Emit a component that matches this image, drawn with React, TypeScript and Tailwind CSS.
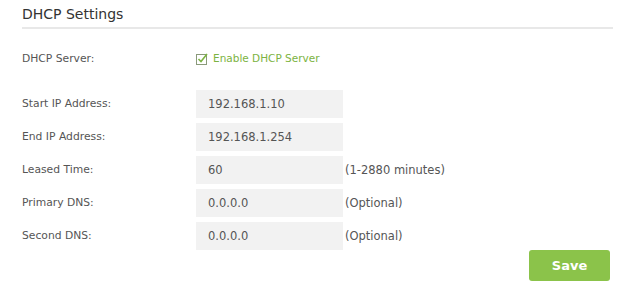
const rows = [
  { label: "Start IP Address:", value: "192.168.1.10", hint: "" },
  { label: "End IP Address:", value: "192.168.1.254", hint: "" },
  { label: "Leased Time:", value: "60", hint: "(1-2880 minutes)" },
  { label: "Primary DNS:", value: "0.0.0.0", hint: "(Optional)" },
  { label: "Second DNS:", value: "0.0.0.0", hint: "(Optional)" },
];

const CheckIcon = () => (
  <svg width="12" height="12" viewBox="0 0 12 12" className="shrink-0">
    <rect x="0.5" y="1.5" width="10" height="10" fill="none" stroke="#8a9a7a" strokeWidth="1" />
    <path d="M2.5 6 L5 8.5 L11 1" fill="none" stroke="#7cb342" strokeWidth="1.6" />
  </svg>
);

export default function App() {
  return (
    <div
      className="w-[624px] h-[299px] bg-white text-[#555] overflow-hidden"
      style={{ fontFamily: '"DejaVu Sans", Verdana, sans-serif' }}
    >
      <div className="pl-[22px] w-[613px]">
        <h2 className="text-[14px] leading-none text-[#333] pt-[7px] pb-[6px] border-b-2 border-[#e8e8e8]">
          DHCP Settings
        </h2>

        <div className="flex items-center mt-[22px] text-[10.75px]">
          <div className="w-[174px]">DHCP Server:</div>
          <label className="flex items-center gap-[5px] text-[10.5px] text-[#7cb342]">
            <CheckIcon />
            <span>Enable DHCP Server</span>
          </label>
        </div>

        <div className="flex flex-col gap-[5px] mt-[23px] text-[10.75px]">
          {rows.map((row) => (
            <div key={row.label} className="flex items-center">
              <div className="w-[174px]">{row.label}</div>
              <div className="w-[147px] h-[28px] bg-[#f2f2f2] flex items-center px-[12px] text-[11.5px] text-[#555]">
                {row.value}
              </div>
              {row.hint && <span className="ml-[2px] text-[11.5px]">{row.hint}</span>}
            </div>
          ))}
        </div>

        <div className="flex justify-end pr-[3px]">
          <button className="w-[81px] h-[31px] rounded-[3px] bg-[#8bc34a] text-white font-semibold text-[13px]">
            Save
          </button>
        </div>
      </div>
    </div>
  );
}
